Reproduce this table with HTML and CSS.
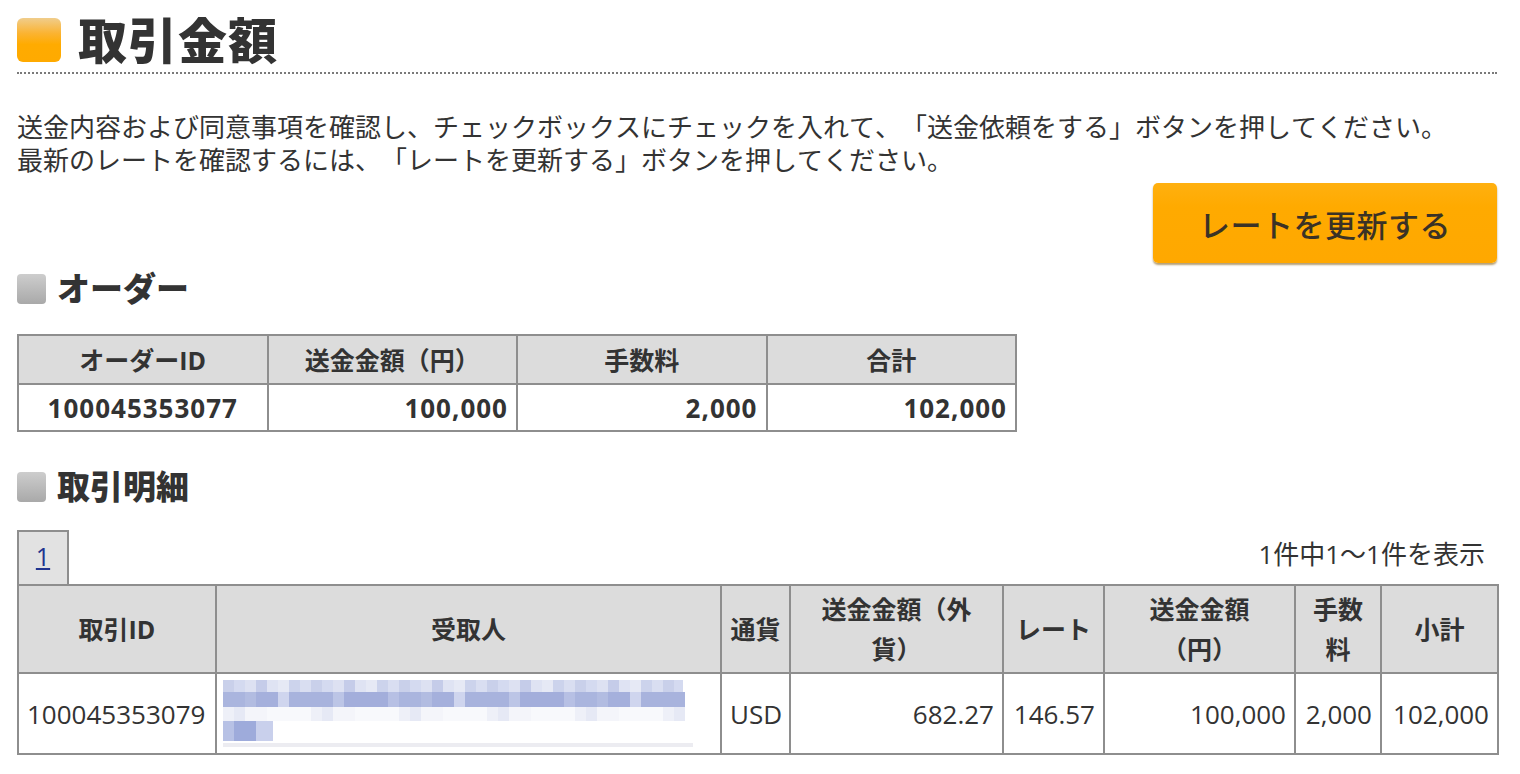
FILE: index.html
```html
<!DOCTYPE html>
<html lang="ja">
<head>
<meta charset="utf-8">
<title>取引金額</title>
<link rel="stylesheet" href="styles.css">
</head>
<body>
<div class="page">
  <h1 class="title"><span class="title-mark"></span><span class="title-text">取引金額</span></h1>

  <p class="intro">送金内容および同意事項を確認し、チェックボックスにチェックを入れて、「送金依頼をする」ボタンを押してください。<br>最新のレートを確認するには、「レートを更新する」ボタンを押してください。</p>

  <div class="actions">
    <button class="btn-refresh" type="button">レートを更新する</button>
  </div>

  <h2 class="section"><span class="section-mark"></span><span>オーダー</span></h2>

  <table class="order">
    <thead>
      <tr><th>オーダーID</th><th>送金金額（円）</th><th>手数料</th><th>合計</th></tr>
    </thead>
    <tbody>
      <tr><td class="center">100045353077</td><td class="num">100,000</td><td class="num">2,000</td><td class="num">102,000</td></tr>
    </tbody>
  </table>

  <h2 class="section section-2"><span class="section-mark"></span><span>取引明細</span></h2>

  <div class="pager-row">
    <div class="tab"><a href="#">1</a></div>
    <div class="count">1件中1〜1件を表示</div>
  </div>

  <table class="detail">
    <colgroup>
      <col class="c-id"><col class="c-name"><col class="c-cur"><col class="c-fx"><col class="c-rate"><col class="c-jpy"><col class="c-fee"><col class="c-sub">
    </colgroup>
    <thead>
      <tr><th>取引ID</th><th>受取人</th><th>通貨</th><th>送金金額（外貨）</th><th>レート</th><th>送金金額（円）</th><th>手数料</th><th>小計</th></tr>
    </thead>
    <tbody>
      <tr>
        <td>100045353079</td>
        <td class="blur-cell">
          <div class="blur">
            <div class="blur-r1"></div>
            <div class="blur-r2"></div>
            <div class="blur-r3"></div>
            <div class="blur-r4"></div>
            <div class="blur-r5"></div>
          </div>
        </td>
        <td>USD</td>
        <td class="num">682.27</td>
        <td class="num">146.57</td>
        <td class="num">100,000</td>
        <td class="num">2,000</td>
        <td class="num">102,000</td>
      </tr>
    </tbody>
  </table>
</div>
</body>
</html>
```

FILE: styles.css
```css
* { box-sizing: border-box; }

html, body {
  margin: 0;
  padding: 0;
  background: #fff;
}

body {
  font-family: "Open Sans", "Noto Sans CJK JP", sans-serif;
  font-size: 26px;
  color: #333;
  text-spacing-trim: space-all;
  font-kerning: none;
}

.page {
  width: 1520px;
  padding: 17px 23px 0 17px;
}

/* Title */
.title {
  display: flex;
  align-items: center;
  gap: 17px;
  margin: 0;
  padding-bottom: 9px;
  border-bottom: 2px dotted #7a7a7a;
  font-size: 49px;
  line-height: 46px;
  font-weight: 900;
  color: #333;
}

.title-mark {
  width: 44px;
  height: 44px;
  border-radius: 6px;
  background: linear-gradient(to bottom, #f0cd8c 0%, #fbb331 35%, #ffab00 60%, #ffaa00 100%);
  flex: none;
}

.title-text {
  letter-spacing: 1px;
}

/* Intro */
.intro {
  margin: 37px 0 0 0;
  line-height: 33px;
}

.actions {
  display: flex;
  justify-content: flex-end;
  margin-top: 6px;
}

.btn-refresh {
  width: 344px;
  height: 80px;
  border: none;
  border-radius: 5px;
  background: linear-gradient(to bottom, #ffb010, #ffaa00 30%, #ffa800);
  box-shadow: 0 2px 2px rgba(120, 80, 0, 0.55);
  font-family: "Open Sans", "Noto Sans CJK JP", sans-serif;
  font-size: 31px;
  font-weight: 500;
  color: #3a3226;
  letter-spacing: 0.5px;
  cursor: pointer;
  padding: 0;
}

/* Section headings */
.section {
  display: flex;
  align-items: center;
  gap: 11px;
  margin: 8px 0 0 0;
  font-size: 33px;
  line-height: 36px;
  font-weight: 800;
  color: #333;
}

.section-2 {
  margin-top: 37px;
}

.section-mark {
  width: 29px;
  height: 30px;
  border-radius: 4px;
  background: linear-gradient(to bottom, #cdcdcd, #a9a9a9);
  flex: none;
}

/* Tables */
table {
  border-collapse: collapse;
}

th, td {
  border: 2px solid #8e8e8e;
}

th {
  background: #dcdcdc;
  font-weight: 700;
  color: #333;
}

.order {
  margin-top: 27px;
  width: 1000px;
  table-layout: fixed;
}

.order th {
  height: 49px;
  padding: 0 8px;
  line-height: 36px;
  font-size: 25px;
}

.order td {
  height: 47px;
  padding: 0 8px;
  font-weight: 700;
  line-height: 36px;
  letter-spacing: 1px;
}

.order td.num {
  text-align: right;
  padding-right: 8px;
}

.center {
  text-align: center;
}

/* Pager */
.pager-row {
  display: flex;
  justify-content: space-between;
  align-items: center;
  margin-top: 25px;
  width: 1480px;
}

.tab {
  width: 52px;
  height: 54px;
  border: 2px solid #8e8e8e;
  border-bottom: none;
  background: #e2e2e2;
  display: flex;
  align-items: center;
  justify-content: center;
  padding-bottom: 4px;
}

.tab a {
  color: #22348f;
  text-decoration: underline;
  font-size: 25px;
  line-height: 30px;
}

.count {
  padding-right: 12px;
  font-size: 26px;
  line-height: 30px;
  margin-top: -6px;
}

.detail {
  width: 1480px;
  table-layout: fixed;
}

.c-id { width: 198px; }
.c-name { width: 505px; }
.c-cur { width: 69px; }
.c-fx { width: 213px; }
.c-rate { width: 101px; }
.c-jpy { width: 191px; }
.c-fee { width: 86px; }
.c-sub { width: 117px; }

.detail th {
  height: 88px;
  padding: 2px 8px;
  font-size: 25px;
  line-height: 40px;
  text-align: center;
}

.detail th:nth-child(3) {
  padding: 2px 4px;
}

.detail td {
  height: 81px;
  padding: 0 8px;
  line-height: 36px;
  white-space: nowrap;
}

.detail td.num {
  text-align: right;
}

.detail td.blur-cell {
  padding: 4px 6px;
  vertical-align: middle;
}

/* Pixelated (blurred) recipient name */
.blur {
  width: 470px;
  display: flex;
  flex-direction: column;
}

.blur-r1 {
  height: 12px;
  width: 460px;
  background:
    repeating-linear-gradient(to right,
      #c9d0ea 0 11px, #d4daf0 11px 22px, #dde1f2 22px 33px, #c5cce9 33px 44px,
      #dfe3f3 44px 55px, #e6e9f5 55px 66px, #ccd3ec 66px 77px, #d9def1 77px 88px);
}

.blur-r2 {
  height: 15px;
  width: 462px;
  background:
    repeating-linear-gradient(to right,
      #aab5de 0 22px, #b2bce1 22px 33px, #a5b0dc 33px 55px, #cfd5ee 55px 66px,
      #a8b3dd 66px 110px, #bcc5e6 110px 121px, #a3aedb 121px 165px, #b7c0e4 165px 176px);
}

.blur-r3 {
  height: 14px;
  width: 462px;
  background:
    repeating-linear-gradient(to right,
      #eef0f8 0 11px, #e6e9f5 11px 22px, #f4f5fa 22px 44px, #f8f9fc 44px 88px);
}

.blur-r4 {
  height: 20px;
  width: 50px;
  background:
    linear-gradient(to right, #b7c1e5 0 11px, #9eabdb 11px 33px, #c9d0ec 33px 50px);
}

.blur-r5 {
  margin-top: 2px;
  height: 4px;
  width: 470px;
  background: #ececf1;
}
```
